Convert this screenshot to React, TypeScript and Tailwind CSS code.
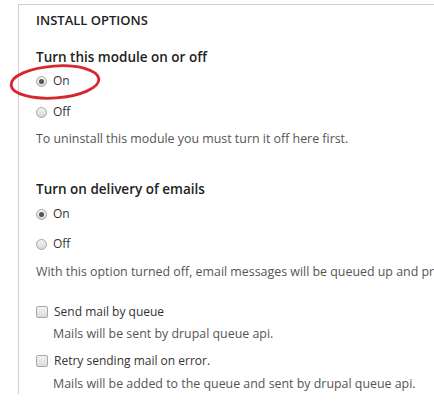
import React from "react";

function Radio({ checked }: { checked?: boolean }) {
  return (
    <span className="relative inline-flex h-[11px] w-[11px] items-center justify-center rounded-full border border-[#a5a5a5] bg-gradient-to-b from-[#f4f4f4] to-[#d8d8d8]">
      {checked && <span className="h-[5px] w-[5px] rounded-full bg-[#555]" />}
    </span>
  );
}

function Checkbox() {
  return (
    <span className="inline-block h-[12px] w-[12px] rounded-[2px] border border-[#a8a8a8] bg-gradient-to-b from-[#f3f3f3] to-[#dcdcdc]" />
  );
}

export default function App() {
  return (
    <div
      className="h-[411px] w-[434px] overflow-hidden bg-white text-[#333]"
      style={{ fontFamily: '"Open Sans", "DejaVu Sans", sans-serif' }}
    >
      <div className="relative ml-[18px] mt-[4px] w-[520px] border-l border-t border-[#cfcfcf] pl-[17px] pt-[5px]">
        <div className="text-[13px] font-semibold leading-[20px] text-[#222]">INSTALL OPTIONS</div>

        <div className="mt-[17px] text-[13.5px] font-semibold leading-[20px] text-[#222]">
          Turn this module on or off
        </div>
        <div className="mt-[4px] flex items-center gap-[6px] text-[12px] leading-[20px]">
          <Radio checked />
          <span>On</span>
        </div>
        <div className="mt-[11px] flex items-center gap-[6px] text-[12px] leading-[20px]">
          <Radio />
          <span>Off</span>
        </div>
        <div className="mt-[7px] whitespace-nowrap text-[12.4px] leading-[20px] text-[#555]">
          To uninstall this module you must turn it off here first.
        </div>

        <div className="mt-[30px] text-[13.5px] font-semibold leading-[20px] text-[#222]">
          Turn on delivery of emails
        </div>
        <div className="mt-[5px] flex items-center gap-[6px] text-[12px] leading-[20px]">
          <Radio checked />
          <span>On</span>
        </div>
        <div className="mt-[10px] flex items-center gap-[6px] text-[12px] leading-[20px]">
          <Radio />
          <span>Off</span>
        </div>
        <div className="mt-[8px] whitespace-nowrap text-[12.4px] leading-[20px] text-[#555]">
          With this option turned off, email messages will be queued up and processed later.
        </div>

        <div className="mt-[20px] flex items-center gap-[6px] text-[12px] leading-[20px]">
          <Checkbox />
          <span>Send mail by queue</span>
        </div>
        <div className="mt-[2px] pl-[17px] text-[12.4px] leading-[20px] text-[#555]">
          Mails will be sent by drupal queue api.
        </div>
        <div className="mt-[7px] flex items-center gap-[6px] text-[12px] leading-[20px]">
          <Checkbox />
          <span>Retry sending mail on error.</span>
        </div>
        <div className="mt-[3px] pl-[17px] text-[12.4px] leading-[20px] text-[#555]">
          Mails will be added to the queue and sent by drupal queue api.
        </div>

        <svg
          className="pointer-events-none absolute left-[-11px] top-[58px]"
          width="96"
          height="40"
          viewBox="0 0 96 40"
        >
          <ellipse
            cx="47"
            cy="19"
            rx="44"
            ry="16"
            transform="rotate(-4 47 19)"
            fill="none"
            stroke="#d8262e"
            strokeWidth="2.8"
          />
        </svg>
      </div>
    </div>
  );
}
